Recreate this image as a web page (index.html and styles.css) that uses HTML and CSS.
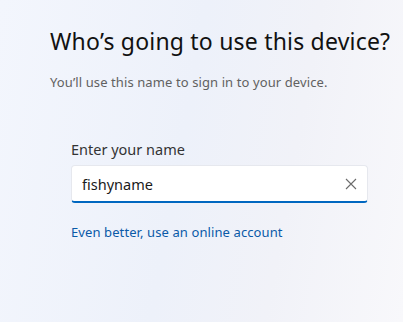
FILE: index.html
```html
<!DOCTYPE html>
<html lang="en">
<head>
  <meta charset="UTF-8" />
  <meta name="viewport" content="width=device-width, initial-scale=1.0"/>
  <title>Who's going to use this device?</title>
  <link rel="stylesheet" href="styles.css">
</head>
<body>
  <div class="setup">
    <h1>Who’s going to use this device?</h1>
    <p class="subtitle">You’ll use this name to sign in to your device.</p>

    <!-- Name form -->
    <form class="name-form">
      <label for="username">Enter your name</label>
      <div class="field">
        <input type="text" id="username" value="fishyname" />
        <button type="button" class="clear" aria-label="Clear">
          <svg width="12" height="12" viewBox="0 0 12 12">
            <path d="M1 1 L11 11 M11 1 L1 11" stroke="#6b6b6b" stroke-width="1.1" fill="none"/>
          </svg>
        </button>
      </div>
      <a href="#" class="link">Even better, use an online account</a>
    </form>
  </div>
</body>
</html>
```

FILE: styles.css
```css
html, body {
  height: 100%;
}

body {
  margin: 0;
  font-family: "Noto Sans", "Open Sans", sans-serif;
  background: linear-gradient(100deg, #f3f6fd 0%, #edf1fa 45%, #f1f2f8 70%, #f8f8fb 100%);
  color: #1a1a1a;
}

.setup {
  padding: 25px 0 0 50px;
}

.setup h1 {
  margin: 0;
  font-size: 23px;
  letter-spacing: 0.2px;
  font-weight: 400;
  color: #111;
}

.subtitle {
  margin: 16px 0 0;
  font-size: 13px;
  letter-spacing: 0.1px;
  color: #616161;
}

.name-form {
  display: flex;
  flex-direction: column;
  align-items: flex-start;
  margin: 48px 0 0 21px;
}

.name-form label {
  font-size: 14.5px;
  color: #333;
  margin-bottom: 6px;
}

.field {
  display: flex;
  align-items: center;
  width: 297px;
  height: 38px;
  box-sizing: border-box;
  background: #fff;
  border: 1px solid #e6e8ee;
  border-bottom: 2px solid #0067c0;
  border-radius: 4px;
}

.field input {
  flex: 1;
  border: none;
  outline: none;
  background: transparent;
  font-family: inherit;
  font-size: 14.5px;
  color: #1a1a1a;
  padding: 0 0 0 10px;
}

.clear {
  border: none;
  background: none;
  padding: 0;
  margin-right: 10px;
  display: flex;
}

.link {
  margin-top: 20px;
  font-size: 13px;
  letter-spacing: 0.1px;
  color: #0a5aa8;
  text-decoration: none;
}
```
